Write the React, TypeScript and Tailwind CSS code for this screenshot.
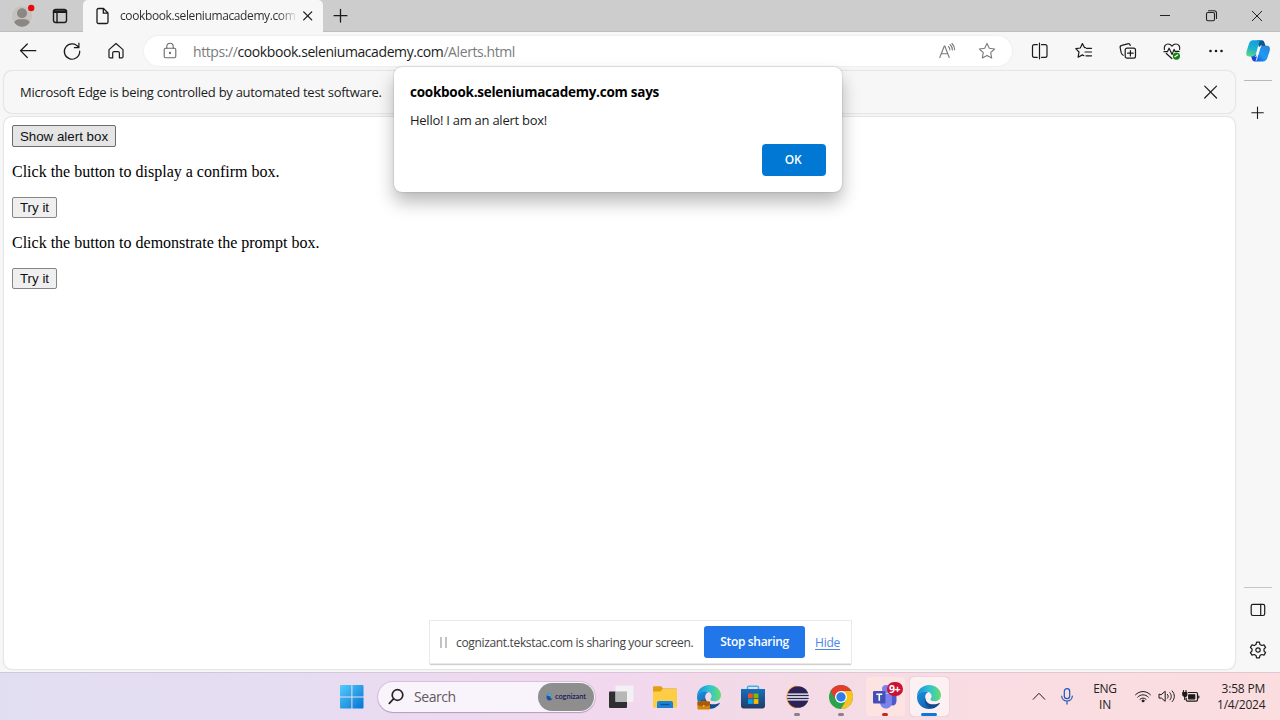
import type { ReactNode } from "react";

type IconProps = { children: ReactNode; size?: string; sw?: number; color?: string; box?: number };

function Icon({ children, size = "size-5", sw = 1.2, color = "#1b1b1b", box = 20 }: IconProps) {
  return (
    <svg
      className={`${size} shrink-0`}
      viewBox={`0 0 ${box} ${box}`}
      fill="none"
      stroke={color}
      strokeWidth={sw}
      strokeLinecap="round"
      strokeLinejoin="round"
    >
      {children}
    </svg>
  );
}

function Slot({ children }: { children: ReactNode }) {
  return <div className="flex h-full w-11 shrink-0 items-center justify-center">{children}</div>;
}

const STAR = "M10 2.4l2.3 4.9 5.3.7-3.9 3.7 1 5.3-4.7-2.6L5.300 17l1-5.300L2.400 8l5.300-.7z";

function TabStrip() {
  return (
    <div className="flex h-8 shrink-0 items-start bg-[#cdcdcd] shadow-[inset_0_-1px_0_#bdbdbd]">
      <div className="flex h-8 w-[83px] shrink-0 items-center pl-[11px]">
        <svg className="h-[24px] w-[26px]" viewBox="0 0 26 24">
          <circle cx="11" cy="12" r="10.700" fill="#c6c3bf" stroke="#d9d6d2" strokeWidth=".7" />
          <circle cx="11" cy="9.300" r="5" fill="#8b8782" />
          <path d="M3.200 18.500c1-2.500 3-3.300 4.500-3.300h6.600c1.500 0 3.500.8 4.500 3.300-2 2.800-4.800 4.200-7.800 4.200s-5.800-1.400-7.800-4.200z" fill="#8b8782" />
          <circle cx="20.200" cy="4" r="3.200" fill="#e60b0b" />
        </svg>
        <div className="ml-[13px] flex">
          <Icon sw={1.4}>
            <rect x="3.500" y="3.500" width="13" height="13" rx="2.300" />
            <path d="M3.500 5h13M3.500 6.300h13M7 7v9.500" />
          </Icon>
        </div>
      </div>
      <div className="flex h-8 w-[240px] shrink-0 items-center rounded-t-[5px] bg-[#f7f7f7] pl-[9px]">
        <Icon sw={1.3}>
          <path d="M5 4c0-.9.6-1.500 1.500-1.500h5L16 7v9c0 .9-.6 1.500-1.500 1.500h-8C5.600 17.500 5 16.900 5 16zM11.300 2.700V7.200H16" />
        </Icon>
        <div className="ml-2 w-[175px] whitespace-nowrap bg-linear-to-r from-[#2b2b2b] from-90% to-[#2b2b2b22] bg-clip-text text-[12px] tracking-[-0.39px] text-transparent">
          cookbook.seleniumacademy.com
        </div>
        <div className="ml-[3px] flex">
          <Icon sw={1.3}>
            <path d="M5.700 5.900l8 8M13.700 5.900l-8 8" />
          </Icon>
        </div>
      </div>
      <div className="ml-[7px] flex h-8 items-center">
        <Icon sw={1.3}>
          <path d="M10.500 3.300v12.800M4.100 9.700h12.800" />
        </Icon>
      </div>
      <div className="ml-auto flex h-8 items-center">
        <div className="flex w-[46px] justify-center">
          <Icon sw={1} color="#222">
            <path d="M5 9.500h10" strokeLinecap="butt" />
          </Icon>
        </div>
        <div className="flex w-[46px] justify-center">
          <Icon sw={1.1} color="#222">
            <rect x="5.500" y="6.500" width="8" height="8.300" rx="1.500" />
            <path d="M7.500 4.700h5.500c1.500 0 2.500 1 2.500 2.400v5.400" />
          </Icon>
        </div>
        <div className="flex w-[46px] justify-center">
          <Icon sw={1} color="#222">
            <path d="M5.300 5.300l9.400 9.400M14.700 5.300l-9.400 9.400" />
          </Icon>
        </div>
      </div>
    </div>
  );
}

function Toolbar() {
  return (
    <div className="flex h-[38px] shrink-0 items-center pl-[6px]">
      <Slot>
        <Icon>
          <path d="M2.500 9.700h15.300M9.300 3L2.500 9.700l6.800 6.800" />
        </Icon>
      </Slot>
      <Slot>
        <Icon>
          <path d="M16.600 6.500A7.700 7.700 0 1 0 17.700 10M16.900 2.200v4.500h-4.500" />
        </Icon>
      </Slot>
      <Slot>
        <Icon>
          <path d="M3 8.600L10 2.500l7 6.100v7.200c0 .7-.4 1.100-1.100 1.100h-2.500V12c0-.8-.5-1.300-1.300-1.300H8c-.8 0-1.300.5-1.300 1.300v4.900H4.100c-.7 0-1.100-.4-1.100-1.100z" />
        </Icon>
      </Slot>
      <div className="ml-[6px] flex h-[30px] w-[868px] shrink-0 items-center rounded-full bg-white pr-[15px] pl-4 shadow-[0_0_3px_rgba(0,0,0,0.07)]">
        <Icon color="#6b6b6b" sw={1.1}>
          <rect x="4.200" y="7.200" width="11.600" height="9.500" rx="1.500" />
          <path d="M6.800 7V5.500C6.800 3.600 8 2.300 10 2.300s3.200 1.300 3.200 3.200V7" />
          <circle cx="10" cy="12" r=".6" fill="#6b6b6b" />
        </Icon>
        <div className="ml-[13px] whitespace-nowrap text-[14px] tracking-[-0.41px] text-[#7b7b7b]">
          https://<span className="text-[#1b1b1b]">cookbook.seleniumacademy.com</span>/Alerts.html
        </div>
        <div className="ml-auto flex gap-5">
          <Icon color="#7a7a7a" sw={1.1}>
            <path d="M2.800 16.500L7.300 5h.5l4.400 11.500M4.300 12.800h6.500M11.400 5.500c1 .9 1.500 2 1.500 3.500M13 3.500c1.600 1.400 2.400 3 2.400 5.500M15 2.500c1.700 1.700 2.600 3.600 2.600 6.300" />
          </Icon>
          <Icon color="#7a7a7a" sw={1.1}>
            <path d={STAR} />
          </Icon>
        </div>
      </div>
      <div className="ml-[6px] flex h-full">
        <Slot>
          <Icon>
            <path d="M7.300 3.700H4.400c-1.100 0-1.900.8-1.900 1.900v8.800c0 1.100.8 1.900 1.900 1.900h2.900M11.500 3.700h3.600c1.100 0 1.900.8 1.900 1.900v8.800c0 1.100-.8 1.900-1.900 1.900h-3.600M9.500 2.200v15.600" />
          </Icon>
        </Slot>
        <Slot>
          <Icon>
            <path d="M11.500 6.700h-.9L8.400 2.600 6.300 7l-4.500.7L5 11l-.9 5.200 4.300-2.300 1.500.8M12.500 7.300h5M11 11h6.500M12 14.800h5.500" />
          </Icon>
        </Slot>
        <Slot>
          <Icon>
            <rect x="7.200" y="7.200" width="10.300" height="10" rx="1.900" />
            <path d="M12.400 9.500v5.500M9.600 12.200h5.600M5.200 14.300C3.900 13.700 3.500 12.800 3.200 11.700L2.200 7C1.900 5.600 2.400 4.700 3.700 4.400l6-1.600c1.300-.3 2.200.2 2.600 1.700" />
          </Icon>
        </Slot>
        <Slot>
          <Icon>
            <path d="M2.400 8.700C1.600 5.300 3.600 3 6 3c1.700 0 3 .8 4 2.100C11 3.800 12.300 3 14 3c2.500 0 4.400 2.300 3.600 5.500M2 10.700h3.400l1.700-3.500 3 6.200 2-5 1 2h4M4.300 12.500l5.500 5" />
            <circle cx="14.400" cy="15.100" r="3.600" fill="#168016" stroke="none" />
            <path d="M12.900 15.700l2.700-1.800" stroke="#fff" />
          </Icon>
        </Slot>
        <Slot>
          <Icon>
            <g fill="#1b1b1b" stroke="none">
              <circle cx="4.500" cy="10" r="1.300" />
              <circle cx="10" cy="10" r="1.300" />
              <circle cx="15.500" cy="10" r="1.300" />
            </g>
          </Icon>
        </Slot>
      </div>
    </div>
  );
}

function Sidebar() {
  return (
    <div className="flex w-11 shrink-0 flex-col items-center">
      <svg className="mt-[7px] h-[24px] w-[26px]" viewBox="0 0 26 24">
        <defs>
          <linearGradient id="cpA" x1=".6" y1="0" x2=".3" y2="1">
            <stop offset="0" stopColor="#0f9fe0" />
            <stop offset=".55" stopColor="#20b4cc" />
            <stop offset="1" stopColor="#5bd685" />
          </linearGradient>
          <linearGradient id="cpB" x1="1" y1="0" x2="0" y2="1">
            <stop offset="0" stopColor="#2d7fdd" />
            <stop offset=".55" stopColor="#1c9cf0" />
            <stop offset="1" stopColor="#1a4be0" />
          </linearGradient>
        </defs>
        <path d="M12 1.300h4.600c1.500 0 2.400.8 2.800 2.200l1.500 4.500h-7z" fill="#0b568f" />
        <path d="M5.500 15.500h7l-2 6.900h-.8c-1.500 0-2.200-.8-2.700-2.400z" fill="#1746d4" />
        <path d="M8 1.300h8.300c-1.500.5-2.100 1.700-2.600 3.400l-2.400 9c-.7 2.600-2 3.700-4 3.700H4.200c-2.500 0-3.500-1.800-2.700-5L3.800 5.200C4.600 2.600 6 1.300 8 1.300z" fill="url(#cpA)" />
        <path d="M17.800 22.600H9.600c1.600-.5 2.400-1.700 2.800-3.400l2.300-8.700C15.400 7.900 16.600 6.700 18.600 6.700h3.200c2.500 0 3.700 1.800 2.900 5l-2.300 7.100c-.8 2.500-2.500 3.800-4.600 3.800z" fill="url(#cpB)" />
        <path d="M14.600 8.200c.4-1 1-1.500 1.900-1.500-1.300 1.100-1.600 2-2.400 5l-.8 3c-.5 1.800-1.400 2.700-2.900 2.700 1.200-1 1.500-2 2-3.900z" fill="#f4fafc" stroke="#f4fafc" strokeWidth=".7" />
      </svg>
      <div className="mt-[17px] h-px w-7 bg-[#b9b9b9]" />
      <div className="mt-[22px] flex">
        <Icon sw={1.1}>
          <path d="M9.500 4v11.500M3.800 9.700h11.500" />
        </Icon>
      </div>
      <div className="mt-auto h-px w-7 bg-[#c6c6c6]" />
      <div className="mt-3 flex">
        <Icon>
          <rect x="3.200" y="4.300" width="13.500" height="11.200" rx="1.700" />
          <path d="M12.700 4.300v11.200" />
        </Icon>
      </div>
      <div className="mt-5 mb-3 flex">
        <Icon>
          <circle cx="10" cy="10" r="2.200" />
          <path d="M8.600 2.200h2.800l.6 2.300 1.700 1 2.300-.6 1.600 2.400-1.600 1.700v2l1.600 1.700-1.600 2.400-2.300-.6-1.700 1-.6 2.300H8.600L8 15.500l-1.700-1-2.300.6-1.600-2.400L4 11V9L2.400 7.300 4 4.900l2.300.6 1.700-1z" />
        </Icon>
      </div>
    </div>
  );
}

function Dialog() {
  return (
    <div className="absolute top-[67px] left-[394px] flex h-[125px] w-[448px] flex-col rounded-[8px] bg-white px-4 pt-[15px] pb-4 shadow-[0_0_2px_rgba(0,0,0,0.25),0_10px_18px_rgba(0,0,0,0.28)]">
      <div className="h-5 whitespace-nowrap text-[13.5px] leading-[21px] font-bold tracking-[-0.25px] text-black">
        cookbook.seleniumacademy.com says
      </div>
      <div className="mt-[8px] h-5 whitespace-nowrap text-[13px] leading-5 tracking-[-0.26px] text-[#1b1b1b]">
        Hello! I am an alert box!
      </div>
      <button className="mt-auto h-8 w-16 self-end rounded-[4px] bg-[#0078d4] pr-0.5 text-[12px] leading-8 font-semibold tracking-[-0.3px] text-white">
        OK
      </button>
    </div>
  );
}

function SharingBar() {
  return (
    <div className="absolute top-[621px] left-[430px] flex h-[42px] w-[421px] items-center bg-white shadow-[0_0_0_1px_#e9e9e9,0_2px_1px_#cfcfcf]">
      <div className="ml-[10px] flex gap-[3px]">
        <div className="h-[11px] w-[2px] bg-[#c3c3c3]" />
        <div className="h-[11px] w-[2px] bg-[#c3c3c3]" />
      </div>
      <div className="ml-[9px] w-[238px] whitespace-nowrap pt-px text-[12px] tracking-[-0.34px] text-[#454545]">
        cognizant.tekstac.com is sharing your screen.
      </div>
      <button className="ml-[10px] h-8 w-[101px] shrink-0 rounded-[3px] bg-[#2176ea] text-[12px] font-semibold tracking-[-0.33px] whitespace-nowrap text-white">
        Stop sharing
      </button>
      <a className="ml-[10px] pt-px text-[12px] tracking-[-0.2px] text-[#4b86e8] underline underline-offset-2">Hide</a>
    </div>
  );
}

function EdgeLogo({ work = false }: { work?: boolean }) {
  return (
    <svg className="size-[26px]" viewBox="0 0 26 26">
      <defs>
        <linearGradient id="edTop" x1="0" y1=".5" x2="1" y2=".5">
          <stop offset="0" stopColor="#1690d8" />
          <stop offset=".5" stopColor="#2cc3d5" />
          <stop offset="1" stopColor="#6bdc6a" />
        </linearGradient>
        <linearGradient id="edLeft" x1="0" y1="0" x2="1" y2="1">
          <stop offset="0" stopColor="#1b93e0" />
          <stop offset="1" stopColor="#0c4e9e" />
        </linearGradient>
      </defs>
      <path d="M1 12.500C1 6 6.500 1 13 1s12 4.700 12 10c0 4-3 6.300-6.300 6.300-2.700 0-4.300-.8-4.300-1.700s1.200-1.500 1.200-3.500c0-2.700-2.600-4.900-6.100-4.900C5 7.200 2 9.500 1 12.500z" fill="url(#edTop)" />
      <path d="M1 13c.3-3.500 3.700-5.800 8-5.800 1.500 0 2.700.3 3.700.8-3 1-4 4-3.300 7 .9 4.200 4.600 7.200 8.600 7.200 1.500 0 2.300-.2 3.400-.7C19.500 24 16.500 25 13 25 6 25 1 19.700 1 13z" fill="url(#edLeft)" />
      <path d="M9.200 13.500c.2 5.200 4.200 7 8.500 6.800 2.200-.1 4-.6 5.500-1.400.5-.3.800.1.500.6-1.500 2.400-4.500 4.700-8 4.500-4.500-.3-8-5-6.500-10.500z" fill="#104b8e" />
      {work && (
        <g>
          <rect x="1.500" y="17.500" width="12.500" height="8" rx="1" fill="#d6820c" />
          <path d="M1.500 18.500c0-.6.4-1 1-1H13c.6 0 1 .4 1 1v2.800l-6.200 1.200-6.300-1.200z" fill="#a65a0a" />
          <path d="M5.500 17.300v-1h4.500v1" fill="none" stroke="#7b4208" />
          <circle cx="7.800" cy="21.800" r=".9" fill="#ffd25a" />
        </g>
      )}
    </svg>
  );
}

function AppButton({ children, tile = "", dot = "" }: { children: ReactNode; tile?: string; dot?: string }) {
  return (
    <div className="flex h-12 w-11 shrink-0 items-center justify-center">
      <div className={`relative flex h-[39px] w-[39px] items-center justify-center rounded-[4px] ${tile}`}>
        {children}
        {dot && <div className={`absolute bottom-0 h-[3px] rounded-full ${dot}`} />}
      </div>
    </div>
  );
}

function Taskbar() {
  return (
    <div className="flex h-12 shrink-0 items-center bg-[linear-gradient(90deg,#e2def1_0%,#e5ddf2_22%,#ebdaf0_32%,#f2d8ee_48%,#f3dae6_60%,#f9dde2_78%,#fbdde0_100%)] pt-px shadow-[inset_0_1px_0_rgba(90,70,110,0.14)]">
      <svg className="ml-[340px] size-6 shrink-0" viewBox="0 0 24 24">
        <defs>
          <linearGradient id="win" x1="0" y1="0" x2="1" y2="1">
            <stop offset="0" stopColor="#52cdfb" />
            <stop offset="1" stopColor="#0573d2" />
          </linearGradient>
        </defs>
        <path d="M0 1c0-.6.400-1 1-1h10.400v11.400H0zM12.400 0H22.500c.6 0 1 .4 1 1v10.400H12.400zM0 12.400h11.400v11.200H1c-.6 0-1-.4-1-1zM12.400 12.400h11.100v10.200c0 .6-.4 1-1 1H12.400z" fill="url(#win)" />
      </svg>
      <div className="ml-[14px] flex h-[30px] w-[217px] shrink-0 items-center rounded-full bg-[#f9f4fb] pr-px pl-[9px] shadow-[0_0_0_1px_rgba(160,140,170,0.3),0_1px_1px_rgba(100,80,120,0.35)]">
        <Icon sw={1.7} color="#252525">
          <circle cx="10.500" cy="8" r="5.300" />
          <path d="M6.500 11.900l-4.200 4.400" />
        </Icon>
        <div className="ml-[7px] text-[14px] tracking-[-0.45px] text-[#5d5a60]">Search</div>
        <div className="ml-auto flex h-7 w-14 items-center justify-center gap-[1px] rounded-full bg-[#8e8e8e]">
          <svg className="size-2" viewBox="0 0 8 8">
            <path d="M4 .5A3.500 3.500 0 0 0 4 7.500L6.500 6C4 5.500 3.500 3 6 1z" fill="#1d4fa8" />
            <path d="M1 2.500C2 .5 4 0 6 1L4 3.500z" fill="#35b7d6" />
          </svg>
          <span className="font-['Lato'] text-[7.500px] leading-none font-semibold tracking-[-0.1px] text-[#1d1b5c]">cognizant</span>
        </div>
      </div>
      <div className="ml-1 flex">
        <AppButton>
          <svg className="size-[26px]" viewBox="0 0 26 26">
            <rect x="1" y="7.500" width="18" height="16.500" rx="1" fill="#2f2f2f" />
            <rect x="7.500" y="1.500" width="18" height="16.500" rx="1" fill="#f3f3f3" fillOpacity=".92" />
            <path d="M7.500 7.500H19V18H7.500z" fill="#b7b7b7" />
          </svg>
        </AppButton>
        <AppButton>
          <svg className="size-[26px]" viewBox="0 0 26 26">
            <path d="M1 3.500c0-.7.500-1.200 1.200-1.200h7L11 4.500h12.500c.8 0 1.300.5 1.300 1.300V12H1z" fill="#e19e10" />
            <path d="M1 7.500h7.300l2.500-2.500h12.800c.8 0 1.400.5 1.400 1.300v16.200c0 .8-.6 1.300-1.300 1.300H2.200c-.7 0-1.200-.5-1.200-1.300z" fill="#fdcd45" />
            <path d="M5 24v-5c0-1.200.8-2 2-2h12c1.200 0 2 .8 2 2v5z" fill="#1982d8" />
            <path d="M8.500 20.500h9" stroke="#0c4f94" strokeWidth="1.300" />
          </svg>
        </AppButton>
        <AppButton>
          <EdgeLogo work />
        </AppButton>
        <AppButton>
          <svg className="size-[26px]" viewBox="0 0 26 26">
            <defs>
              <linearGradient id="store" x1="0" y1="0" x2="0" y2="1">
                <stop offset="0" stopColor="#1470bd" />
                <stop offset="1" stopColor="#213a68" />
              </linearGradient>
            </defs>
            <path d="M7.500 6V3.500c0-.8.500-1.300 1.300-1.300h8.400c.8 0 1.300.5 1.300 1.300V6" fill="none" stroke="#35b5ee" strokeWidth="1.500" />
            <path d="M1 5h24v17c0 1.500-1 2.500-2.500 2.500h-19C2 24.500 1 23.500 1 22z" fill="url(#store)" />
            <path d="M8 9.500h4.800v4.800H8z" fill="#f25022" />
            <path d="M13.600 9.500h4.800v4.800h-4.800z" fill="#7fba00" />
            <path d="M8 15.100h4.800v4.800H8z" fill="#00a4ef" />
            <path d="M13.600 15.100h4.800v4.800h-4.800z" fill="#ffb900" />
          </svg>
        </AppButton>
        <AppButton dot="w-[6px] bg-[#8b8088]">
          <svg className="size-[26px]" viewBox="0 0 26 26">
            <path d="M12 2.200A11 11 0 0 0 12 23.800 13 13 0 0 1 12 2.200z" fill="#f7941e" stroke="#f7941e" strokeWidth="1.500" />
            <circle cx="14" cy="13" r="10.800" fill="#2c2255" />
            <path d="M3.300 10.200h21.500M3 13h22M3.300 15.800h21.500" stroke="#fff" strokeWidth="1.300" />
          </svg>
        </AppButton>
        <AppButton dot="w-[6px] bg-[#8b8088]">
          <svg className="size-[26px]" viewBox="0 0 26 26">
            <circle cx="13" cy="13" r="12" fill="#2ca24c" />
            <path d="M13 13L2.600 7A12 12 0 0 1 23.400 7z" fill="#e33b2e" />
            <path d="M2.600 7l5.200 9L13 7z" fill="#e33b2e" />
            <path d="M13 7h10.400A12 12 0 0 1 13 25l5.200-9z" fill="#fcc31e" />
            <circle cx="13" cy="13" r="6" fill="#fff" />
            <circle cx="13" cy="13" r="4.700" fill="#2f7de9" />
          </svg>
        </AppButton>
        <AppButton tile="bg-[#fde4e3]" dot="w-[6px] bg-[#c42b1c]">
          <svg className="size-[26px]" viewBox="0 0 26 26">
            <circle cx="14" cy="5" r="4" fill="#7b83eb" />
            <path d="M17 9.500h7.500v7c0 3-1.500 5-4 5s-3.500-1-3.500-3z" fill="#5059c9" />
            <path d="M8 9.500h12V18c0 4-2.500 6.500-6 6.500S8 22 8 18z" fill="#7b83eb" />
            <rect x="1" y="7" width="12.500" height="12.500" rx="1" fill="#4450b5" />
            <path d="M4.300 10.300h6M7.300 10.300v6.500" stroke="#fff" strokeWidth="1.600" />
          </svg>
          <div className="absolute top-[5px] left-[21px] flex h-[14px] w-4 items-center justify-center rounded-full bg-[#cc1136] text-[10.500px] leading-none font-bold tracking-[-0.5px] text-white">
            9+
          </div>
        </AppButton>
        <AppButton tile="bg-[#fcf0f3] shadow-[0_0_1px_rgba(120,80,90,0.5)]" dot="w-4 bg-[#0f78d4]">
          <EdgeLogo />
        </AppButton>
      </div>
      <div className="ml-auto flex items-center pr-[15px] text-[12px] leading-[16px] text-[#242424]">
        <Icon sw={1}>
          <path d="M4.200 12.300L10 6.300l5.800 6" />
        </Icon>
        <div className="ml-2 flex">
          <Icon sw={1.2} color="#1f58b5">
            <rect x="7.300" y="1.700" width="5.400" height="10" rx="2.700" />
            <path d="M4.700 9c0 3 2.300 5 5.300 5s5.300-2 5.300-5M10 14.100v3" />
          </Icon>
        </div>
        <div className="ml-4 w-6 text-center tracking-[-0.3px]">
          ENG
          <br />
          IN
        </div>
        <div className="ml-4 flex gap-1">
          <Icon sw={1}>
            <path d="M2.500 7.800c4.300-4.400 10.700-4.400 15 0M4.700 10.100c3-3.100 7.600-3.100 10.600 0M7 12.300c1.800-1.700 4.200-1.700 6 0" />
            <circle cx="10" cy="13.900" r="1" fill="#1b1b1b" />
          </Icon>
          <Icon sw={1}>
            <path d="M2 7.500v3.600h2.400l3.800 3.200V4.300L4.400 7.500zM10.500 7.400c.9 1.200.9 2.700 0 3.800M12.900 5.700c1.900 2.300 1.900 5 0 7.200M15.200 4c2.900 3.400 2.900 7.300 0 10.600" />
          </Icon>
          <Icon sw={1.2}>
            <path d="M7.500 5.500h7.700c.8 0 1.300.5 1.300 1.300v6c0 .8-.5 1.300-1.300 1.300H6.500c-.8 0-1.300-.5-1.300-1.300v-1.500" />
            <path d="M7.700 7.800h6v4h-6z" fill="#1b1b1b" />
            <path d="M17.800 9v1.800M2.500 3.500v2M5 3.500v2M3.700 9v3.500" />
            <path d="M1.800 5.500h4v2c0 1-1 2-2 2s-2-1-2-2z" fill="#1b1b1b" />
          </Icon>
        </div>
        <div className="ml-[16px] w-12 text-right tracking-[-0.2px] whitespace-nowrap">
          3:58 PM
          <br />
          1/4/2024
        </div>
      </div>
    </div>
  );
}

const pageButton =
  "block rounded-[2px] border pt-px font-['Liberation_Sans',sans-serif] text-[13.333px] leading-none text-[#101010] whitespace-nowrap";

export default function App() {
  return (
    <div className="relative flex h-[720px] w-[1280px] flex-col overflow-hidden bg-[#f7f7f7] font-['Open_Sans',sans-serif]">
      <TabStrip />
      <div className="flex min-h-0 flex-1">
        <div className="flex w-[1236px] shrink-0 flex-col">
          <Toolbar />
          <div className="mt-px mr-px ml-1 flex h-[42px] shrink-0 items-center justify-between rounded-[8px] bg-[#f7f7f7] pr-[14px] pl-4 shadow-[0_0_2px_rgba(0,0,0,0.25)]">
            <span className="pt-0.5 text-[13px] tracking-[-0.28px] whitespace-nowrap text-[#1b1b1b]">
              Microsoft Edge is being controlled by automated test software.
            </span>
            <Icon sw={1.2}>
              <path d="M3.700 4.200l11.800 11.800M15.500 4.200L3.700 16" />
            </Icon>
          </div>
          <div className="mt-1 mr-px mb-[3px] ml-1 flex-1 rounded-[8px] bg-white px-2 pt-2 shadow-[0_0_2px_rgba(0,0,0,0.25)]">
            <button className={`${pageButton} h-[22px] w-[104px] border-[#6b6b6b] bg-[#e5e5e5]`}>Show alert box</button>
            <p className="mt-4 font-['Liberation_Serif',serif] text-[16px] leading-[18px] text-black">
              Click the button to display a confirm box.
            </p>
            <button className={`${pageButton} mt-4 h-[21px] w-[45px] border-[#858585] bg-[#efefef]`}>Try it</button>
            <p className="mt-4 font-['Liberation_Serif',serif] text-[16px] leading-[18px] text-black">
              Click the button to demonstrate the prompt box.
            </p>
            <button className={`${pageButton} mt-4 h-[21px] w-[45px] border-[#858585] bg-[#efefef]`}>Try it</button>
          </div>
        </div>
        <Sidebar />
      </div>
      <Taskbar />
      <Dialog />
      <SharingBar />
    </div>
  );
}
